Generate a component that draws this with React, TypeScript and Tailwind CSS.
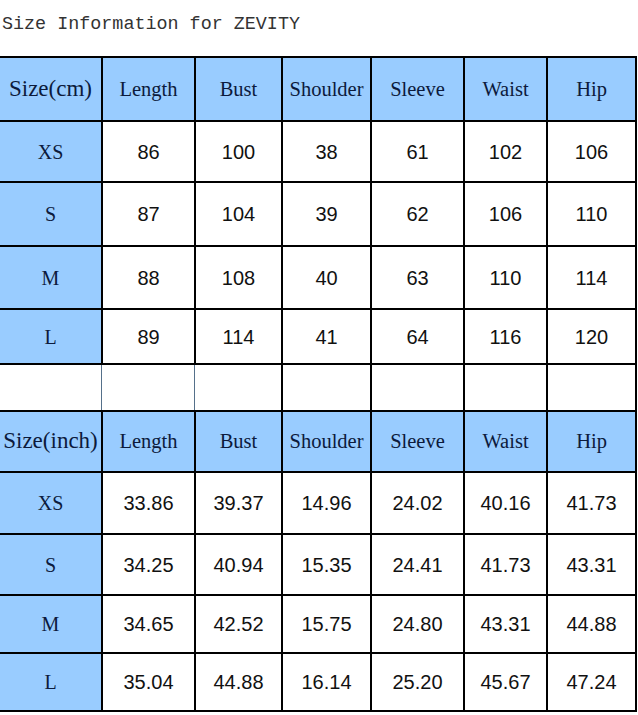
import React from "react";

const colCls = [
  "w-[103px]",
  "w-[93px]",
  "w-[87px]",
  "w-[89px]",
  "w-[93px]",
  "w-[83px]",
  "w-[89px]",
];

const heads = ["Length", "Bust", "Shoulder", "Sleeve", "Waist", "Hip"];

const cmRows: [string, string[], string][] = [
  ["XS", ["86", "100", "38", "61", "102", "106"], "h-[61px]"],
  ["S", ["87", "104", "39", "62", "106", "110"], "h-[64px]"],
  ["M", ["88", "108", "40", "63", "110", "114"], "h-[63px]"],
  ["L", ["89", "114", "41", "64", "116", "120"], "h-[55px]"],
];

const inRows: [string, string[], string][] = [
  ["XS", ["33.86", "39.37", "14.96", "24.02", "40.16", "41.73"], "h-[62px]"],
  ["S", ["34.25", "40.94", "15.35", "24.41", "41.73", "43.31"], "h-[61px]"],
  ["M", ["34.65", "42.52", "15.75", "24.80", "43.31", "44.88"], "h-[58px]"],
  ["L", ["35.04", "44.88", "16.14", "25.20", "45.67", "47.24"], "h-[58px]"],
];

const serif = "font-['Liberation_Serif','Times_New_Roman',serif]";
const sans = "font-['Liberation_Sans',Arial,sans-serif]";

function HeaderRow({ first, h }: { first: string; h: string }) {
  return (
    <div className={`flex ${h}`}>
      <div
        className={`${colCls[0]} shrink-0 bg-[#99ccff] border-r-2 border-b-2 border-black flex items-center justify-center text-[23px] text-[#0c1a3c] ${serif} whitespace-nowrap`}
      >
        {first}
      </div>
      {heads.map((t, i) => (
        <div
          key={t}
          className={`${colCls[i + 1]} shrink-0 bg-[#99ccff] border-r-2 border-b-2 border-black flex items-center justify-center text-[20.5px] text-[#0c1a3c] ${serif} whitespace-nowrap`}
        >
          {t}
        </div>
      ))}
    </div>
  );
}

function DataRow({ label, vals, h }: { label: string; vals: string[]; h: string }) {
  return (
    <div className={`flex ${h}`}>
      <div
        className={`${colCls[0]} shrink-0 bg-[#99ccff] border-r-2 border-b-2 border-black flex items-center justify-center text-[20px] text-[#0c1a3c] ${serif}`}
      >
        {label}
      </div>
      {vals.map((v, i) => (
        <div
          key={i}
          className={`${colCls[i + 1]} shrink-0 bg-white border-r-2 border-b-2 border-black flex items-center justify-center text-[20px] text-[#111111] ${sans}`}
        >
          {v}
        </div>
      ))}
    </div>
  );
}

function EmptyRow() {
  return (
    <div className="flex h-[47px] border-b-2 border-black">
      <div className={`${colCls[0]} shrink-0 flex`}>
        <div className="flex-1 border-r border-[#55708a] mr-[1px]" />
      </div>
      <div className={`${colCls[1]} shrink-0 flex`}>
        <div className="flex-1 border-r border-[#55708a] mr-[1px]" />
      </div>
      {[2, 3, 4, 5, 6].map((i) => (
        <div key={i} className={`${colCls[i]} shrink-0 border-r-2 border-black`} />
      ))}
    </div>
  );
}

export default function App() {
  return (
    <div className="w-[638px] h-[715px] bg-white overflow-hidden">
      <div className="h-[56px] pt-[13px] pl-[2px] leading-[24px] text-[18.4px] text-[#333333] font-['Liberation_Mono','Courier_New',monospace] whitespace-pre">
        Size Information for ZEVITY
      </div>
      <div className="w-[637px] border-t-2 border-black">
        <HeaderRow first="Size(cm)" h="h-[64px]" />
        {cmRows.map(([l, v, h]) => (
          <DataRow key={"c" + l} label={l} vals={v} h={h} />
        ))}
        <EmptyRow />
        <HeaderRow first="Size(inch)" h="h-[61px]" />
        {inRows.map(([l, v, h]) => (
          <DataRow key={"i" + l} label={l} vals={v} h={h} />
        ))}
      </div>
    </div>
  );
}
